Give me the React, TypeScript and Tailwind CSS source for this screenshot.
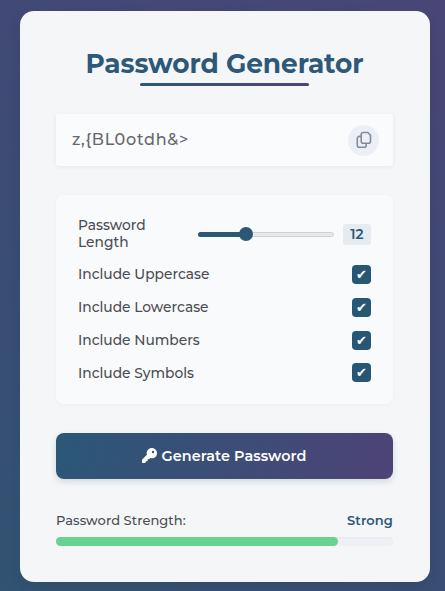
import { useState } from "react";
import { FaKey } from "react-icons/fa6";

const options = ["Include Uppercase", "Include Lowercase", "Include Numbers", "Include Symbols"];

function Option({ label }: { label: string }) {
  const [checked, setChecked] = useState(true);
  return (
    <label className="flex h-[19px] items-center justify-between">
      <span>{label}</span>
      <button
        role="checkbox"
        aria-checked={checked}
        aria-label={label}
        onClick={() => setChecked(!checked)}
        className="flex size-[19px] items-center justify-center rounded-[4px] bg-[#285775] font-['DejaVu_Sans',sans-serif] text-[13px] leading-none text-white"
      >
        {checked ? "✔" : ""}
      </button>
    </label>
  );
}

function CopyIcon() {
  return (
    <svg width="16" height="18" viewBox="0 0 16 18" fill="none" stroke="currentColor" strokeWidth="1.6" strokeLinejoin="round">
      <path d="M7.2 1.5h4.6l2.7 2.7v6.1a2 2 0 0 1-2 2H7.2a2 2 0 0 1-2-2V3.5a2 2 0 0 1 2-2Z" />
      <path d="M5.2 5.4H3.3a2 2 0 0 0-2 2v6.8a2 2 0 0 0 2 2h4.9a2 2 0 0 0 2-2v-1.9" />
    </svg>
  );
}

export default function App() {
  return (
    <main className="h-[591px] w-[445px] overflow-hidden bg-linear-[35deg] from-[#325372] via-[#3d4b75] to-[#494676] pt-[11px] pl-5 font-['Montserrat','Inter',sans-serif] text-[#4b4d52]">
      <section className="flex h-[571px] w-[410px] flex-col rounded-[14px] bg-[#f5f6f8] pr-[37px] pl-9 shadow-[0_4px_12px_rgba(0,0,0,0.08)]">
        <header className="flex flex-col items-center pt-[35px]">
          <h1 className="h-[36px] text-[26.4px] leading-[36px] font-bold tracking-[-0.1px] whitespace-nowrap text-[#2d5878]">Password Generator</h1>
          <div className="mt-px h-[3px] w-[169px] rounded-full bg-linear-to-r from-[#2b5876] to-[#4e4376]" />
        </header>

        <div className="mt-[28px] flex h-[52px] shrink-0 items-center justify-between rounded-[3px] bg-[#fafbfd] pr-[14px] pl-4 shadow-[0_1px_4px_rgba(30,40,60,0.07)]">
          <span className="text-[16px] font-medium tracking-[0.75px] text-[#66676a]">{"z,{BL0otdh&>"}</span>
          <button aria-label="Copy password" className="flex size-[31px] items-center justify-center rounded-full bg-[#eceff5] pb-px text-[#858b99]">
            <CopyIcon />
          </button>
        </div>

        <div className="mt-[29px] flex h-[209px] shrink-0 flex-col rounded-lg bg-[#f9fafc] px-[22px] pt-[22px] text-[13.8px] font-medium shadow-[0_1px_5px_rgba(30,40,60,0.03)]">
          <div className="flex h-[34px] items-center">
            <span className="flex w-[120px] shrink-0 flex-col leading-[17px]"><span>Password</span><span>Length</span></span>
            <div className="relative flex h-[14px] w-[136px] shrink-0 items-center">
              <div className="h-[5px] w-full rounded-full border border-[#cfd0d5] bg-[#e8e9ec]" />
              <div className="absolute left-0 h-[5px] w-[48px] rounded-l-full bg-[#2b5876]" />
              <div className="absolute left-[41px] size-[14px] rounded-full bg-[#2b5876]" />
            </div>
            <span className="ml-[9px] flex h-[21px] w-7 shrink-0 items-center justify-center rounded-[3px] bg-[#e5ebef] font-semibold text-[#2b5876]">12</span>
          </div>
          <div className="mt-[14px] flex flex-col gap-[13.8px]">
            {options.map((label) => (
              <Option key={label} label={label} />
            ))}
          </div>
        </div>

        <button className="mt-[28.5px] flex h-[46px] shrink-0 items-center justify-center gap-1 rounded-lg bg-linear-[110deg] from-[#2b5876] to-[#4e4376] text-[14.4px] font-semibold tracking-[0.09px] text-white shadow-[0_3px_6px_rgba(43,88,118,0.18)]">
          <FaKey className="size-[15px]" />
          <span className="pt-[2px]">Generate Password</span>
        </button>

        <footer className="mt-[32px] text-[13px]">
          <div className="flex h-5 items-center justify-between">
            <span className="font-medium tracking-[0.05px]">Password Strength:</span>
            <span className="font-semibold tracking-[0.1px] text-[#2d5878]">Strong</span>
          </div>
          <div className="mt-[6px] h-[9px] rounded-full bg-[#edf0f4] shadow-[inset_0_1px_2px_rgba(0,0,0,0.03)]">
            <div className="h-full w-[282px] rounded-full bg-[#68d391]" />
          </div>
        </footer>
      </section>
    </main>
  );
}
